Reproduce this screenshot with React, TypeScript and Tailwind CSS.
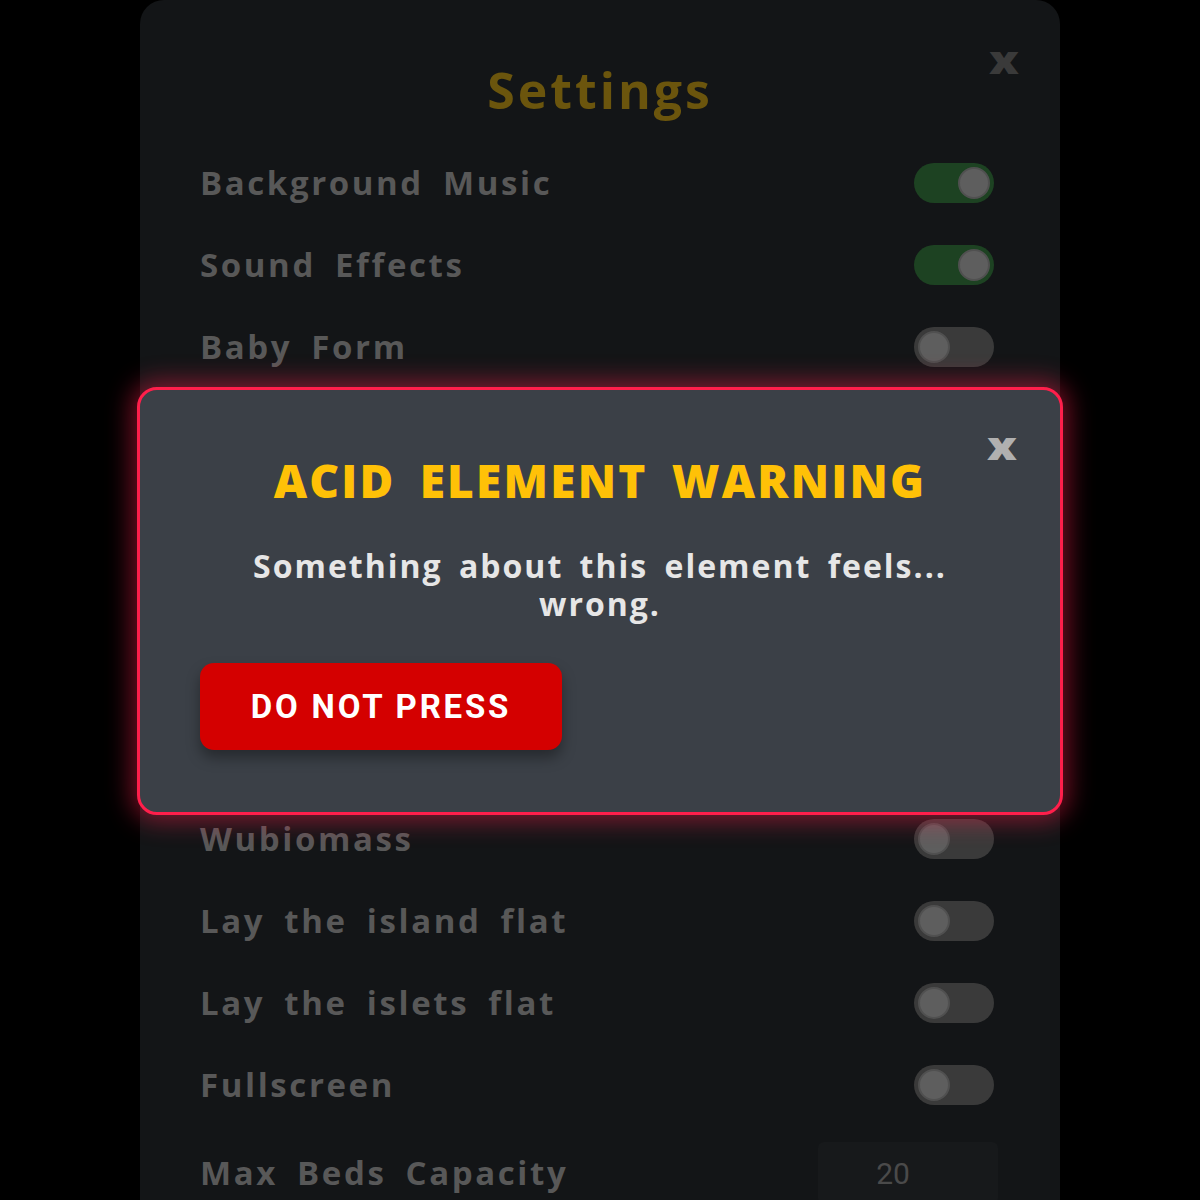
import React from "react";

// rows hidden behind the warning have no visible label in the picture
const rows: { label: string; on?: boolean }[] = [
  { label: "Background Music", on: true },
  { label: "Sound Effects", on: true },
  { label: "Baby Form" },
  { label: "" },
  { label: "" },
  { label: "" },
  { label: "" },
  { label: "" },
  { label: "Wubiomass" },
  { label: "Lay the island flat" },
  { label: "Lay the islets flat" },
  { label: "Fullscreen" },
];

const font = { fontFamily: '"Open Sans", "Noto Sans", sans-serif' };

function Toggle({ on }: { on?: boolean }) {
  return (
    <div
      className={
        on
          ? "mr-[6px] flex h-[40px] w-[80px] items-center justify-end rounded-full bg-[#1d4222] px-[4px]"
          : "mr-[6px] flex h-[40px] w-[80px] items-center justify-start rounded-full bg-[#3a3a3a] px-[4px]"
      }
    >
      <div className="h-[32px] w-[32px] rounded-full border-2 border-[#505050] bg-[#5e5e5e]" />
    </div>
  );
}

export default function App() {
  return (
    <div className="relative h-[1200px] w-full overflow-hidden bg-black" style={font}>
      {/* dimmed settings panel */}
      <div className="mx-auto h-[1260px] w-[920px] rounded-t-[24px] bg-[#131517] px-[60px] pt-[52px]">
        <div className="relative flex h-[76px] items-center justify-center">
          <h1 className="text-[50px] font-bold leading-none tracking-[3px] text-[#6b550d]">
            Settings
          </h1>
          <span className="absolute right-[-16px] top-[-12px] scale-x-125 text-[38px] font-black leading-none text-[#3a3a3a]">
            x
          </span>
        </div>
        <div className="mt-[14px] flex flex-col">
          {rows.map((r, i) => (
            <div key={i} className="flex h-[82px] items-center justify-between">
              <span className="text-[33px] font-bold tracking-[2.6px] text-[#585858] [word-spacing:8px]">
                {r.label}
              </span>
              <Toggle on={r.on} />
            </div>
          ))}
          <div className="flex h-[94px] items-center justify-between">
            <span className="text-[33px] font-bold tracking-[2.6px] text-[#585858] [word-spacing:8px]">
              Max Beds Capacity
            </span>
            <div
              className="mr-[2px] flex h-[62px] w-[180px] items-center justify-center rounded-[6px] bg-[#17191b] pr-[30px] text-[30px] text-[#4a4a4a]"
              style={{ fontFamily: "Roboto, sans-serif" }}
            >
              20
            </div>
          </div>
        </div>
      </div>

      {/* warning modal */}
      <div className="absolute left-[137px] top-[387px] flex h-[428px] w-[926px] flex-col rounded-[20px] border-[3px] border-[#ff1f4b] bg-[#3b4047] px-[60px] pt-[62px] shadow-[0_0_24px_6px_rgba(255,31,75,0.45)]">
        <span className="absolute right-[46px] top-[36px] scale-x-125 text-[38px] font-black leading-none text-[#b0b0b0]">
          x
        </span>
        <h2 className="text-center text-[46px] font-extrabold leading-[56px] tracking-[2.2px] text-[#ffc107] [word-spacing:10px]">
          ACID ELEMENT WARNING
        </h2>
        <p className="mx-auto mt-[39px] w-[740px] text-center text-[32px] font-bold leading-[38px] tracking-[2px] text-[#e6e6e6] [word-spacing:6px]">
          Something about this element feels... wrong.
        </p>
        <div className="mt-[40px]">
          <button
            className="h-[87px] w-[362px] rounded-[14px] bg-[#d40000] text-[33px] font-bold tracking-[2.8px] text-white shadow-[0_8px_14px_rgba(0,0,0,0.35)]"
            style={{ fontFamily: "Roboto, sans-serif" }}
          >
            DO NOT PRESS
          </button>
        </div>
      </div>
    </div>
  );
}
